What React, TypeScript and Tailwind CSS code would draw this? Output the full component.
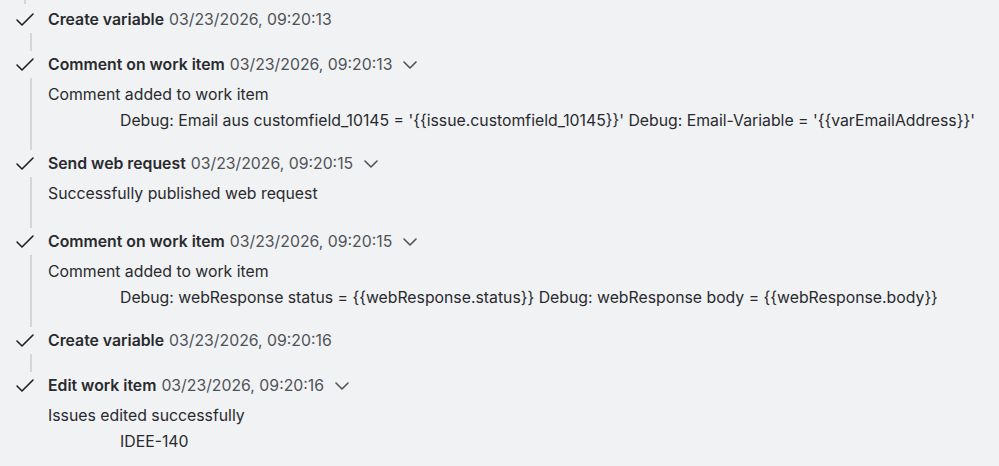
import React from "react";
import { Check, ChevronDown } from "lucide-react";

type AuditItem = {
  title: string;
  time: string;
  expandable?: boolean;
  body?: string;
  details?: string[];
  tail?: number;
};

const ITEMS: AuditItem[] = [
  { title: "Create variable", time: "03/23/2026, 09:20:13" },
  {
    title: "Comment on work item",
    time: "03/23/2026, 09:20:13",
    expandable: true,
    body: "Comment added to work item",
    details: [
      "Debug: Email aus customfield_10145 = '{{issue.customfield_10145}}' Debug: Email-Variable = '{{varEmailAddress}}'",
    ],
  },
  {
    title: "Send web request",
    time: "03/23/2026, 09:20:15",
    expandable: true,
    body: "Successfully published web request",
    tail: 24,
  },
  {
    title: "Comment on work item",
    time: "03/23/2026, 09:20:15",
    expandable: true,
    body: "Comment added to work item",
    details: [
      "Debug: webResponse status = {{webResponse.status}} Debug: webResponse body = {{webResponse.body}}",
    ],
  },
  { title: "Create variable", time: "03/23/2026, 09:20:16" },
  {
    title: "Edit work item",
    time: "03/23/2026, 09:20:16",
    expandable: true,
    body: "Issues edited successfully",
    details: ["IDEE-140"],
  },
];

function AuditRow({ item, last }: { item: AuditItem; last: boolean }) {
  const hasBody = !!item.body;
  // spacing below each entry, the connector runs through it
  const pb = last ? "pb-0" : hasBody ? (item.tail === 24 ? "pb-[24px]" : "pb-[19px]") : "pb-[21px]";
  return (
    <div className="flex">
      {/* icon + connector */}
      <div className="w-12 shrink-0 pl-[13px] flex flex-col">
        <div className="w-6 h-6 flex items-center justify-center text-[#1f2024]">
          <Check size={24} strokeWidth={1.6} />
        </div>
        {!last && (
          <div className="flex-1 flex justify-center mt-px mb-[2px]">
            <div className="w-[2px] bg-[#d5d6da]" />
          </div>
        )}
      </div>

      {/* content */}
      <div className={`flex flex-col min-w-0 ${pb}`}>
        <div className="h-6 flex items-center whitespace-nowrap">
          <span className="font-semibold text-[#292a2e]">{item.title}</span>
          <span className="ml-[5px] text-[#505258]">{item.time}</span>
          {item.expandable && (
            <span className="ml-1.5 text-[#505258] flex items-center">
              <ChevronDown size={24} strokeWidth={1.6} />
            </span>
          )}
        </div>
        {hasBody && (
          <div className="mt-[6px] h-6 flex items-center text-[#292a2e] whitespace-nowrap">
            {item.body}
          </div>
        )}
        {item.details?.map((d, i) => (
          <div key={i} className="mt-[2px] h-6 flex items-center pl-[72px] text-[#292a2e] whitespace-nowrap">
            {d}
          </div>
        ))}
      </div>
    </div>
  );
}

export default function App() {
  return (
    <div className="w-[999px] h-[466px] overflow-hidden bg-[#f1f2f4] text-[15.8px] font-['Inter','Noto_Sans',sans-serif]">
      <div className="w-12 pl-[13px] h-[4px] flex">
        <div className="w-6 flex justify-center">
          <div className="w-[2px] bg-[#d5d6da]" />
        </div>
      </div>
      <div className="pt-[4px]">
        {ITEMS.map((it, i) => (
          <AuditRow key={i} item={it} last={i === ITEMS.length - 1} />
        ))}
      </div>
    </div>
  );
}
